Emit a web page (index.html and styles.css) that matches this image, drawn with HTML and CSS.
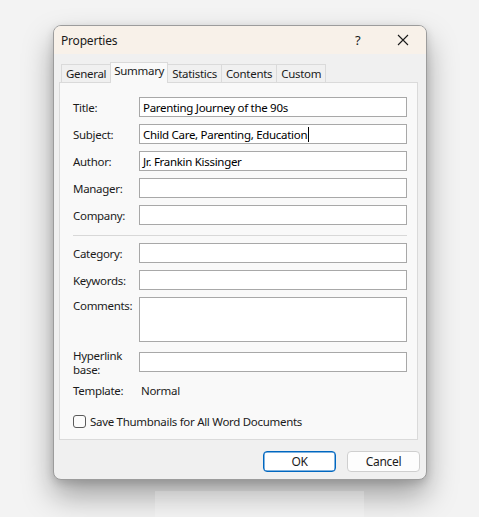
FILE: index.html
```html
<!DOCTYPE html>
<html>
<head>
<meta charset="utf-8">
<title>Properties</title>
<link rel="stylesheet" href="styles.css">
</head>
<body>
<div class="window">
  <div class="titlebar">
    <span class="title">Properties</span>
    <span class="help">?</span>
    <span class="close"><svg width="12" height="12" viewBox="0 0 12 12"><path d="M1 1 L11 11 M11 1 L1 11" stroke="#1a1a1a" stroke-width="1.1" fill="none"/></svg></span>
  </div>
  <div class="body">
    <div class="tabs">
      <div class="tab">General</div>
      <div class="tab active">Summary</div>
      <div class="tab">Statistics</div>
      <div class="tab">Contents</div>
      <div class="tab">Custom</div>
    </div>
    <div class="panel">
      <div class="row"><label>Title:</label><div class="field">Parenting Journey of the 90s</div></div>
      <div class="row"><label>Subject:</label><div class="field">Child Care, Parenting, Education<span class="caret"></span></div></div>
      <div class="row"><label>Author:</label><div class="field">Jr. Frankin Kissinger</div></div>
      <div class="row"><label>Manager:</label><div class="field"></div></div>
      <div class="row"><label>Company:</label><div class="field"></div></div>
      <div class="sep"></div>
      <div class="row"><label>Category:</label><div class="field"></div></div>
      <div class="row"><label>Keywords:</label><div class="field"></div></div>
      <div class="row top"><label class="toplabel">Comments:</label><div class="field area"></div></div>
      <div class="row top hyper"><label class="twoline">Hyperlink<br>base:</label><div class="field"></div></div>
      <div class="row plain"><label>Template:</label><span class="value">Normal</span></div>
      <div class="check"><span class="box"></span><span>Save Thumbnails for All Word Documents</span></div>
    </div>
    <div class="buttons">
      <div class="btn primary">OK</div>
      <div class="btn">Cancel</div>
    </div>
  </div>
</div>
<div class="glare"></div>
</body>
</html>
```
FILE: styles.css
```css
html, body {
  margin: 0;
  padding: 0;
}
body {
  width: 479px;
  height: 517px;
  background: #f3f3f3;
  font-family: "Noto Sans", "Open Sans", sans-serif;
  font-size: 11.5px;
  letter-spacing: -0.3px;
  color: #1b1b1b;
  overflow: hidden;
  position: relative;
}
.window {
  margin: 25px 0 0 53px;
  width: 372px;
  height: 453px;
  border: 1px solid #9c9c9c;
  border-radius: 8px;
  overflow: hidden;
  background: #f0f0f0;
  box-shadow: 0 16px 30px rgba(0, 0, 0, 0.34), 0 3px 8px rgba(0, 0, 0, 0.14);
  display: flex;
  flex-direction: column;
}
.titlebar {
  height: 28px;
  flex: none;
  background: #f8f1e9;
  display: flex;
  align-items: center;
  padding-left: 7px;
}
.title {
  flex: 1;
  font-size: 12px;
  letter-spacing: -0.2px;
  color: #1a1a1a;
}
.help {
  width: 12px;
  font-size: 13px;
  margin-right: 30px;
  color: #1a1a1a;
}
.close {
  width: 12px;
  height: 12px;
  margin-right: 17px;
  display: flex;
}
.body {
  flex: 1;
  padding: 8px 8px 0 5px;
  display: flex;
  flex-direction: column;
}
.tabs {
  display: flex;
  flex: none;
  align-items: flex-end;
  padding-left: 2px;
  height: 20px;
  position: relative;
  z-index: 1;
}
.tab {
  height: 18px;
  box-sizing: border-box;
  border: 1px solid #dadada;
  border-bottom: none;
  background: #f0f0f0;
  line-height: 17px;
  padding: 0 4px;
  margin-left: -1px;
}
.tab:first-child {
  margin-left: 0;
}
.tab.active {
  height: 21px;
  background: #f9f9f9;
  line-height: 15px;
  margin-bottom: -1px;
  padding: 0 3px;
}
.panel {
  height: 358px;
  flex: none;
  box-sizing: border-box;
  border: 1px solid #dadada;
  background: #f9f9f9;
  padding: 14px 10px 0 13px;
  display: flex;
  flex-direction: column;
}
.panel > * {
  flex: none;
}
.row {
  display: flex;
  align-items: center;
  margin-bottom: 7px;
}
.row label {
  width: 66px;
  flex: none;
}
.row.top {
  align-items: flex-start;
}
.toplabel {
  padding-top: 1px;
}
.field {
  flex: 1;
  height: 20px;
  box-sizing: border-box;
  border: 1px solid #a8a8a8;
  background: #ffffff;
  padding: 0 3px;
  line-height: 17px;
  color: #000;
  white-space: nowrap;
  display: flex;
  align-items: center;
}
.field.area {
  height: 45px;
}
.caret {
  display: inline-block;
  width: 1px;
  height: 15px;
  background: #000;
  margin-left: 1px;
}
.sep {
  height: 1px;
  background: #d8d8d8;
  margin: 3px 0 7px 0;
}
.hyper {
  margin-top: 3px;
  margin-bottom: 0;
}
.twoline {
  line-height: 14px;
  margin-top: -3px;
}
.plain {
  margin-top: 4px;
  margin-bottom: 0;
  height: 18px;
}
.value {
  margin-left: 2px;
}
.check {
  display: flex;
  align-items: center;
  margin-top: 16px;
  height: 13px;
}
.box {
  width: 11px;
  height: 11px;
  border: 1px solid #5a5a5a;
  border-radius: 3px;
  background: #fbfbfb;
  margin-right: 4px;
}
.buttons {
  display: flex;
  flex: none;
  justify-content: flex-end;
  gap: 11px;
  padding-top: 11px;
  margin-right: -2px;
}
.btn {
  width: 73px;
  height: 21px;
  box-sizing: border-box;
  border: 1px solid #cfcfcf;
  border-radius: 4px;
  background: #fdfdfd;
  text-align: center;
  line-height: 19px;
  font-size: 12px;
}
.btn.primary {
  border: 1px solid #0067c0;
  box-shadow: inset 0 0 0 0.5px #0067c0;
  background: #ffffff;
}
.glare {
  position: absolute;
  left: 155px;
  top: 491px;
  width: 209px;
  height: 26px;
  background: rgba(255, 255, 255, 0.2);
}
```
